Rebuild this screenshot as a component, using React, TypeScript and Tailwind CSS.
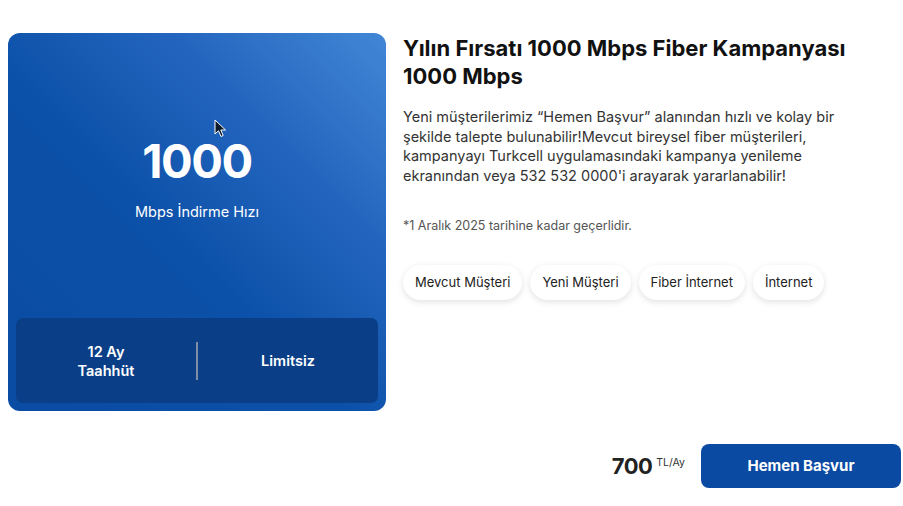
import React from "react";

const chips = ["Mevcut Müşteri", "Yeni Müşteri", "Fiber İnternet", "İnternet"];

export default function App() {
  return (
    <div
      className="w-[903px] h-[506px] bg-white relative overflow-hidden"
      style={{ fontFamily: "Inter, 'Noto Sans', sans-serif" }}
    >
      <div className="flex pt-[33px] pl-[8px]">
        {/* Card */}
        <div className="relative w-[378px] h-[378px] rounded-[12px] bg-[linear-gradient(225deg,#4287d6_0%,#2466bf_28%,#0c51a9_55%,#0a4ba3_100%)] flex flex-col p-[8px]">
          <div className="flex-1 flex flex-col items-center pt-[92px]">
            <div className="text-white font-bold text-[47px] leading-[56px] tracking-[-1.5px]">1000</div>
            <div className="text-white text-[14.5px] leading-[20px] mt-[13px]">Mbps İndirme Hızı</div>
          </div>
          <div className="h-[85px] rounded-[7px] bg-[#0a3f88] flex items-center">
            <div className="flex-1 text-center text-white font-semibold text-[14.5px] leading-[19px]">
              12 Ay
              <br />
              Taahhüt
            </div>
            <div className="w-[2px] h-[38px] bg-[#7e8ea6]" />
            <div className="flex-1 text-center text-white font-semibold text-[14.5px] leading-[19px]">Limitsiz</div>
          </div>
          <svg className="absolute left-[206px] top-[86px]" width="14" height="20" viewBox="0 0 14 20">
            <path d="M1 1 L1 15 L4.5 11.8 L7 17.5 L9.2 16.5 L6.8 11 L11.5 11 Z" fill="#0d1b2a" stroke="#ffffff" strokeWidth="1" strokeLinejoin="round" />
          </svg>
        </div>

        {/* Right column */}
        <div className="ml-[17px] flex flex-col w-[490px]">
          <h1 className="text-[#111] font-bold text-[22px] leading-[28px] mt-[1px]">
            Yılın Fırsatı 1000 Mbps Fiber Kampanyası
            <br />
            1000 Mbps
          </h1>
          <p className="text-[#333] text-[14.5px] leading-[19.5px] mt-[17px] w-[445px]">
            Yeni müşterilerimiz “Hemen Başvur” alanından hızlı ve kolay bir şekilde talepte bulunabilir!Mevcut bireysel fiber müşterileri, kampanyayı Turkcell uygulamasındaki kampanya yenileme ekranından veya 532 532 0000'i arayarak yararlanabilir!
          </p>
          <p className="text-[#555] text-[12.5px] leading-[18px] mt-[32px]">*1 Aralık 2025 tarihine kadar geçerlidir.</p>
          <div className="flex gap-[8px] mt-[30px]">
            {chips.map((c) => (
              <div
                key={c}
                className="h-[35px] px-[12px] rounded-full bg-white flex items-center text-[13px] text-[#222] shadow-[0_2px_6px_rgba(0,0,0,0.12)]"
              >
                {c}
              </div>
            ))}
          </div>
        </div>
      </div>

      <div className="flex justify-end items-center pr-[2px] mt-[33px]">
        <div className="flex items-start mr-[16px]">
          <span className="text-[#222] font-bold text-[22px] leading-[28px] tracking-[-0.5px]">700</span>
          <span className="text-[#333] text-[10.5px] leading-[14px] ml-[4px] mt-[4px]">TL/Ay</span>
        </div>
        <button className="w-[200px] h-[44px] rounded-[8px] bg-[#0a4aa3] text-white font-bold text-[15px]">
          Hemen Başvur
        </button>
      </div>
    </div>
  );
}
